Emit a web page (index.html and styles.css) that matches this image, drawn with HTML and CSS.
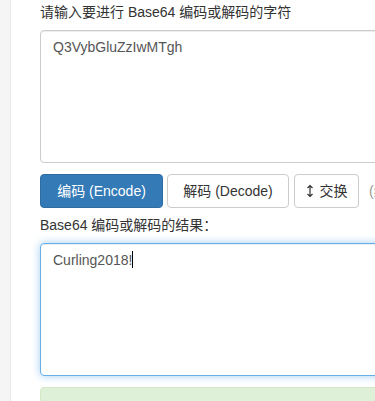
FILE: index.html
```html
<!DOCTYPE html>
<html lang="zh-CN">
<head>
    <meta charset="UTF-8">
    <meta name="viewport" content="width=device-width, initial-scale=1.0">
    <title>Base64 编码 / 解码</title>
    <link rel="stylesheet" href="styles.css">
</head>
<body>
    <div class="page">
        <div class="sidebar"></div>

        <div class="main">
            <label class="field-label">请输入要进行 Base64 编码或解码的字符</label>
            <div class="text-box">Q3VybGluZzIwMTgh</div>

            <div class="actions">
                <button class="btn btn-primary btn-encode">编码 (Encode)</button>
                <button class="btn btn-decode">解码 (Decode)</button>
                <button class="btn btn-swap">
                    <svg class="icon" width="8" height="14" viewBox="0 0 8 14">
                        <path d="M4 1.5 V12.5 M1.5 4 L4 1.5 L6.5 4 M1.5 10 L4 12.5 L6.5 10" fill="none" stroke="#333" stroke-width="1.2"/>
                    </svg><span>交换</span>
                </button>
                <span class="hint">(编码结果会自动复制)</span>
            </div>

            <label class="field-label">Base64 编码或解码的结果：</label>
            <div class="text-box focused">Curling2018!<span class="caret"></span></div>

            <div class="alert-success"></div>
        </div>
    </div>
</body>
</html>
```

FILE: styles.css
```css
html, body {
    margin: 0;
    padding: 0;
    overflow: hidden;
    background-color: #fff;
}

body {
    font-family: "Liberation Sans", Arial, "Noto Sans CJK SC", sans-serif;
    font-size: 14px;
    line-height: 20px;
    color: #333;
}

.page {
    display: flex;
    min-height: 401px;
}

.sidebar {
    width: 10px;
    flex-shrink: 0;
    background-color: #f5f5f5;
    border-right: 1px solid #e7e7e7;
}

.main {
    width: 560px;
    flex-shrink: 0;
    padding: 2px 0 0 29px;
}

.field-label {
    display: block;
    margin-bottom: 8px;
}

.text-box {
    height: 133px;
    box-sizing: border-box;
    padding: 6px 12px;
    border: 1px solid #ccc;
    border-radius: 4px;
    color: #555;
    box-shadow: inset 0 1px 1px rgba(0,0,0,0.075);
}

.text-box.focused {
    border-color: #66afe9;
    box-shadow: inset 0 1px 1px rgba(0,0,0,0.075), 0 0 8px rgba(102,175,233,0.6);
}

.caret {
    display: inline-block;
    width: 1px;
    height: 17px;
    background-color: #000;
    vertical-align: -3px;
}

.actions {
    display: flex;
    align-items: center;
    margin: 11px 0 7px;
}

.btn {
    height: 34px;
    box-sizing: border-box;
    padding: 6px 0;
    font-family: inherit;
    font-size: 14px;
    line-height: 20px;
    color: #333;
    background-color: #fff;
    border: 1px solid #ccc;
    border-radius: 4px;
    cursor: pointer;
    display: inline-flex;
    align-items: center;
    justify-content: center;
    gap: 6px;
    white-space: nowrap;
    flex-shrink: 0;
}

.btn-primary {
    color: #fff;
    background-color: #337ab7;
    border-color: #2e6da4;
}

.btn-encode {
    width: 123px;
    margin-right: 4px;
}

.btn-decode {
    width: 122px;
    margin-right: 5px;
}

.btn-swap {
    width: 65px;
}

.icon {
    display: block;
}

.hint {
    margin-left: 10px;
    color: #999;
    white-space: nowrap;
}

.alert-success {
    margin-top: 11px;
    height: 60px;
    background-color: #dff0d8;
    border: 1px solid #d6e9c6;
    border-radius: 4px;
}
```
